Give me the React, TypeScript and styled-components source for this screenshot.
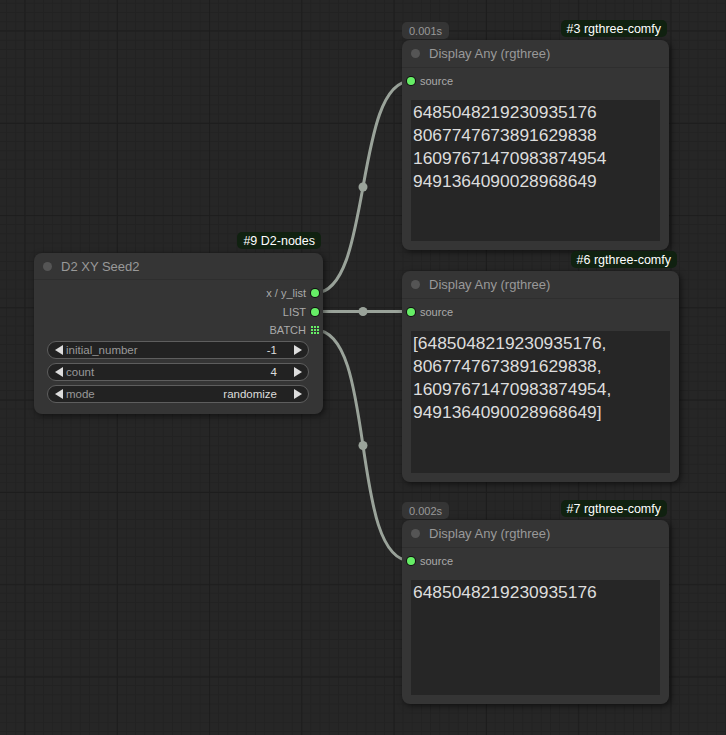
import React from "react";
import styled, { createGlobalStyle } from "styled-components";

const GlobalStyle = createGlobalStyle`
  html, body { margin: 0; padding: 0; background: #262626; }
  body { font-family: "Liberation Sans", Arial, sans-serif; overflow: hidden; }
`;

const Canvas = styled.div`
  position: relative;
  width: 726px;
  height: 735px;
  overflow: hidden;
  background-color: #262626;
  background-image:
    linear-gradient(to right, #1d1d1d 1px, transparent 1px),
    linear-gradient(to bottom, #1d1d1d 1px, transparent 1px),
    linear-gradient(to right, #222222 1px, transparent 1px),
    linear-gradient(to bottom, #222222 1px, transparent 1px);
  background-size: 92.3px 92.3px, 92.3px 92.3px, 9.23px 9.23px, 9.23px 9.23px;
  background-position: 24.5px 30.5px, 24.5px 30.5px, 24.5px 30.5px, 24.5px 30.5px;
  font-family: "Liberation Sans", Arial, sans-serif;
`;

const Links = styled.svg`
  position: absolute;
  left: 0;
  top: 0;
  width: 726px;
  height: 735px;
  pointer-events: none;
`;

const Node = styled.div<{ $x: number; $y: number; $w: number; $h: number }>`
  position: absolute;
  left: ${(p) => p.$x}px;
  top: ${(p) => p.$y}px;
  width: ${(p) => p.$w}px;
  height: ${(p) => p.$h}px;
  box-sizing: border-box;
  background: #353535;
  border-radius: 8px;
  box-shadow: 2px 2px 6px rgba(0, 0, 0, 0.55);
  display: flex;
  flex-direction: column;
`;

const TitleBar = styled.div<{ $h: number }>`
  height: ${(p) => p.$h}px;
  flex: none;
  display: flex;
  align-items: center;
  gap: 9px;
  padding-left: 9px;
  border-bottom: 1px solid #2e2e2e;
  box-sizing: border-box;
  font-size: 13px;
  color: #999999;
`;

const TitleDot = styled.span`
  width: 9px;
  height: 9px;
  border-radius: 50%;
  background: #555555;
  flex: none;
`;

const Badge = styled.div<{ $gap: number }>`
  position: absolute;
  right: 2px;
  bottom: calc(100% + ${(p) => p.$gap}px);
  height: 17px;
  padding: 0 6px;
  display: flex;
  align-items: center;
  border-radius: 5px;
  background: #102110;
  color: #ffffff;
  font-size: 12.5px;
  white-space: nowrap;
`;

const TimeBadge = styled.div`
  position: absolute;
  left: 0;
  bottom: calc(100% + 1px);
  height: 17px;
  padding: 0 7px;
  display: flex;
  align-items: center;
  border-radius: 5px;
  background: #353535;
  color: #999999;
  font-size: 11px;
`;

const Outputs = styled.div`
  display: flex;
  flex-direction: column;
  align-items: flex-end;
  padding: 4px 4px 0 0;
`;

const SlotRow = styled.div<{ $align: "left" | "right" }>`
  height: 18.5px;
  display: flex;
  align-items: center;
  gap: 5px;
  flex-direction: ${(p) => (p.$align === "right" ? "row" : "row-reverse")};
  justify-content: flex-end;
  font-size: 11px;
  color: #aaaaaa;
`;

const InputRow = styled(SlotRow)`
  padding: 4px 0 0 5px;
  height: 18px;
  flex: none;
  align-self: flex-start;
`;

const SlotDot = styled.span`
  width: 8px;
  height: 8px;
  border-radius: 50%;
  background: #66ee66;
  box-shadow: 0 0 0 1px #111111;
  flex: none;
`;

const Widgets = styled.div`
  display: flex;
  flex-direction: column;
  gap: 4px;
  padding: 1px 14px 0 13px;
`;

const Widget = styled.div`
  height: 18px;
  box-sizing: border-box;
  border: 1px solid #5e5e5e;
  border-radius: 9px;
  background: #222222;
  display: flex;
  align-items: center;
  padding: 0 6px 0 7px;
  font-size: 11.5px;
`;

const Arrow = styled.span<{ $dir: "left" | "right" }>`
  width: 0;
  height: 0;
  flex: none;
  border-top: 5px solid transparent;
  border-bottom: 5px solid transparent;
  ${(p) =>
    p.$dir === "left"
      ? "border-right: 8px solid #dddddd;"
      : "border-left: 8px solid #dddddd;"}
`;

const WidgetLabel = styled.span`
  color: #999999;
  margin-left: 3px;
  flex: 1;
`;

const WidgetValue = styled.span`
  color: #dddddd;
  margin-right: 17px;
`;

const TextArea = styled.div`
  flex: 1;
  margin: 10px 9px 9px 9px;
  background: #262626;
  color: #dddddd;
  font-size: 17.4px;
  line-height: 23px;
  padding: 1px 2px;
  white-space: pre;
  overflow: hidden;
`;

const BatchIcon = () => (
  <svg width="8" height="8" viewBox="0 0 8 8" style={{ flex: "none" }}>
    {[0, 3, 6].map((y) =>
      [0, 3, 6].map((x) => (
        <rect key={`${x}-${y}`} x={x} y={y} width="2" height="2" fill="#66ee66" />
      ))
    )}
  </svg>
);

type Pt = [number, number];
const spline = (a: Pt, b: Pt) => {
  const d = Math.hypot(b[0] - a[0], b[1] - a[1]) * 0.25;
  const c1: Pt = [a[0] + d, a[1]];
  const c2: Pt = [b[0] - d, b[1]];
  const mid: Pt = [
    0.125 * a[0] + 0.375 * c1[0] + 0.375 * c2[0] + 0.125 * b[0],
    0.125 * a[1] + 0.375 * c1[1] + 0.375 * c2[1] + 0.125 * b[1],
  ];
  return {
    d: `M${a[0]},${a[1]} C${c1[0]},${c1[1]} ${c2[0]},${c2[1]} ${b[0]},${b[1]}`,
    mid,
  };
};

const links = [
  spline([315, 293], [411, 81]),
  spline([315, 311.5], [411, 311.5]),
  spline([315, 330], [411, 561]),
];

type DisplayProps = {
  x: number;
  y: number;
  w: number;
  h: number;
  id: string;
  time?: string;
  text: string;
};

const DisplayNode = ({ x, y, w, h, id, time, text }: DisplayProps) => (
  <Node $x={x} $y={y} $w={w} $h={h}>
    {time && <TimeBadge>{time}</TimeBadge>}
    <Badge $gap={3}>{id} rgthree-comfy</Badge>
    <TitleBar $h={28}>
      <TitleDot />
      Display Any (rgthree)
    </TitleBar>
    <InputRow $align="left">
      <span>source</span>
      <SlotDot />
    </InputRow>
    <TextArea>{text}</TextArea>
  </Node>
);

const widgets = [
  { label: "initial_number", value: "-1" },
  { label: "count", value: "4" },
  { label: "mode", value: "randomize" },
];

export default function App() {
  return (
    <Canvas>
      <GlobalStyle />
      <Links viewBox="0 0 726 735">
        {links.map((l, i) => (
          <g key={i}>
            <path d={l.d} fill="none" stroke="#9aa39a" strokeWidth={3} />
            <circle cx={l.mid[0]} cy={l.mid[1]} r={4.5} fill="#9aa39a" />
          </g>
        ))}
      </Links>

      <Node $x={34} $y={253} $w={289} $h={161}>
        <Badge $gap={4}>#9 D2-nodes</Badge>
        <TitleBar $h={27}>
          <TitleDot />
          D2 XY Seed2
        </TitleBar>
        <Outputs>
          <SlotRow $align="right">
            <span>x / y_list</span>
            <SlotDot />
          </SlotRow>
          <SlotRow $align="right">
            <span>LIST</span>
            <SlotDot />
          </SlotRow>
          <SlotRow $align="right">
            <span>BATCH</span>
            <BatchIcon />
          </SlotRow>
        </Outputs>
        <Widgets>
          {widgets.map((w) => (
            <Widget key={w.label}>
              <Arrow $dir="left" />
              <WidgetLabel>{w.label}</WidgetLabel>
              <WidgetValue>{w.value}</WidgetValue>
              <Arrow $dir="right" />
            </Widget>
          ))}
        </Widgets>
      </Node>

      <DisplayNode
        x={402}
        y={40}
        w={267}
        h={210}
        id="#3"
        time="0.001s"
        text={"6485048219230935176\n8067747673891629838\n16097671470983874954\n9491364090028968649"}
      />
      <DisplayNode
        x={402}
        y={271}
        w={277}
        h={211}
        id="#6"
        text={"[6485048219230935176,\n8067747673891629838,\n16097671470983874954,\n9491364090028968649]"}
      />
      <DisplayNode
        x={402}
        y={520}
        w={267}
        h={184}
        id="#7"
        time="0.002s"
        text={"6485048219230935176"}
      />
    </Canvas>
  );
}
